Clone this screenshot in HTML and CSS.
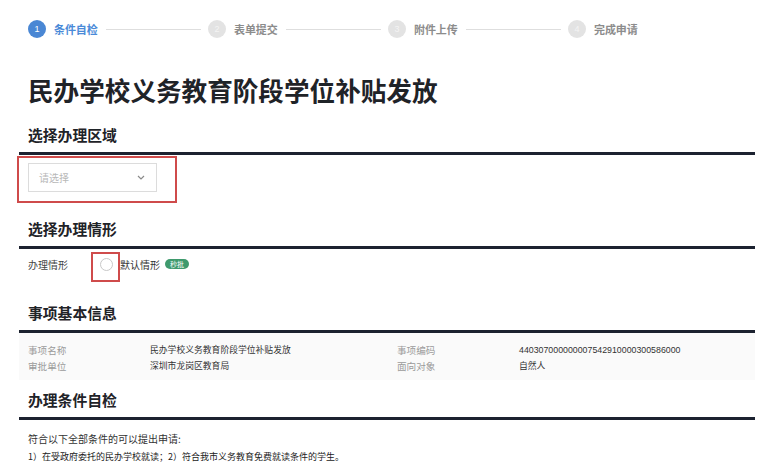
FILE: index.html
```html
<!DOCTYPE html>
<html lang="zh-CN">
<head>
<meta charset="utf-8">
<title>民办学校义务教育阶段学位补贴发放</title>
<link rel="stylesheet" href="styles.css">
</head>
<body>
<div class="page">
  <div class="steps">
    <div class="step active"><span class="num">1</span><span class="label">条件自检</span><span class="line"></span></div>
    <div class="step"><span class="num">2</span><span class="label">表单提交</span><span class="line"></span></div>
    <div class="step"><span class="num">3</span><span class="label">附件上传</span><span class="line"></span></div>
    <div class="step"><span class="num">4</span><span class="label">完成申请</span></div>
  </div>

  <h1 class="title">民办学校义务教育阶段学位补贴发放</h1>

  <h2 class="sec sec-first">选择办理区域</h2>
  <div class="select-wrap">
    <div class="select">
      <span class="placeholder">请选择</span>
      <svg class="chev" width="8" height="5" viewBox="0 0 8 5"><path d="M1 1 L4 4 L7 1" fill="none" stroke="#8a8a8a" stroke-width="1.2"/></svg>
    </div>
    <span class="mark mark-select"></span>
  </div>

  <h2 class="sec sec-case">选择办理情形</h2>
  <div class="case-row">
    <span class="case-label">办理情形</span>
    <span class="radio-wrap"><span class="radio"></span><span class="mark mark-radio"></span></span>
    <span class="case-text">默认情形</span>
    <span class="tag">秒批</span>
  </div>

  <h2 class="sec sec-info">事项基本信息</h2>
  <div class="info">
    <span class="k">事项名称</span><span class="v">民办学校义务教育阶段学位补贴发放</span>
    <span class="k">事项编码</span><span class="v">440307000000007542910000300586000</span>
    <span class="k">审批单位</span><span class="v">深圳市龙岗区教育局</span>
    <span class="k">面向对象</span><span class="v">自然人</span>
  </div>

  <h2 class="sec sec-cond">办理条件自检</h2>
  <p class="cond1">符合以下全部条件的可以提出申请:</p>
  <p class="cond2">1）在受政府委托的民办学校就读；2）符合我市义务教育免费就读条件的学生。</p>
</div>
</body>
</html>
```

FILE: styles.css
```css
* { box-sizing: border-box; }
html, body { margin: 0; padding: 0; background: #fff; }
body {
  font-family: "Noto Sans CJK SC", "Noto Sans", "Liberation Sans", sans-serif;
  color: #222;
  overflow: hidden;
}
.page {
  width: 736px;
  margin-left: 19px;
}

/* steps */
.steps {
  display: flex;
  padding: 20px 0 0 9px;
  height: 38px;
}
.step {
  display: flex;
  align-items: center;
  height: 18px;
}
.num {
  width: 18px;
  height: 18px;
  border-radius: 50%;
  background: #e3e3e3;
  color: #f4f4f4;
  font-size: 9px;
  line-height: 18px;
  text-align: center;
  font-family: "Liberation Sans", sans-serif;
}
.step.active .num { background: #4a87d4; color: #fff; }
.label {
  margin-left: 8px;
  width: 44px;
  font-size: 11px;
  font-weight: 700;
  color: #8c8c8c;
  white-space: nowrap;
  letter-spacing: -0.1px;
}
.step.active .label { color: #4a8ad8; }
.line {
  width: 95px;
  height: 1px;
  background: #dedede;
  margin: 0 7px 0 8px;
}

/* title */
.title {
  margin: 37px 0 0 9px;
  font-size: 25.6px;
  line-height: 30px;
  font-weight: 700;
  color: #1f2328;
  letter-spacing: 0;
}

/* section headings */
.sec {
  margin: 0;
  padding: 0 9px 7px;
  font-size: 14.8px;
  line-height: 20px;
  font-weight: 700;
  color: #1f2328;
  border-bottom: 3px solid #1c2230;
}
.sec-first { margin-top: 20px; }
.sec-case { margin-top: 27px; }
.sec-info { margin-top: 29px; }
.sec-cond { margin-top: 10px; }

/* select */
.select-wrap {
  position: relative;
  margin: 8px 0 0 9px;
  width: 129px;
}
.select {
  display: flex;
  align-items: center;
  justify-content: space-between;
  height: 29px;
  border: 1px solid #dcdcdc;
  padding: 0 11px 0 10px;
}
.placeholder { font-size: 10px; color: #b8b8b8; }
.chev { display: block; }
.mark {
  position: absolute;
  border: 2px solid #cf4b4b;
}
.mark-select { left: -11px; top: -7px; width: 160px; height: 47px; }

/* case row */
.case-row {
  display: flex;
  align-items: center;
  margin: 5px 0 0 9px;
  height: 20px;
  font-size: 10px;
  color: #333;
}
.case-label { width: 72px; color: #444; }
.radio-wrap { position: relative; width: 13px; height: 13px; }
.radio {
  display: block;
  width: 13px;
  height: 13px;
  border: 1px solid #c8c8c8;
  border-radius: 50%;
}
.mark-radio { left: -9px; top: -6px; width: 29px; height: 30px; }
.case-text { margin-left: 7px; color: #333; }
.tag {
  margin-left: 5px;
  background: #3f9a6d;
  color: #fff;
  font-size: 7px;
  line-height: 10px;
  height: 10px;
  padding: 0 5px;
  border-radius: 5px;
}

/* info */
.info {
  display: grid;
  grid-template-columns: 122px 247px 122px 1fr;
  background: #fafafa;
  padding: 9px 0 6px 9px;
  line-height: 16px;
}
.k { color: #9a9a9a; font-size: 9.6px; }
.v {
  color: #333;
  font-size: 8.8px;
  font-family: "Liberation Sans", "Noto Sans CJK SC", sans-serif;
}

/* conditions */
.cond1 {
  margin: 11px 0 0 9px;
  font-size: 10px;
  line-height: 16px;
  color: #333;
}
.cond2 {
  margin: 2px 0 0 9px;
  font-size: 9px;
  line-height: 16px;
  color: #222;
}
```
